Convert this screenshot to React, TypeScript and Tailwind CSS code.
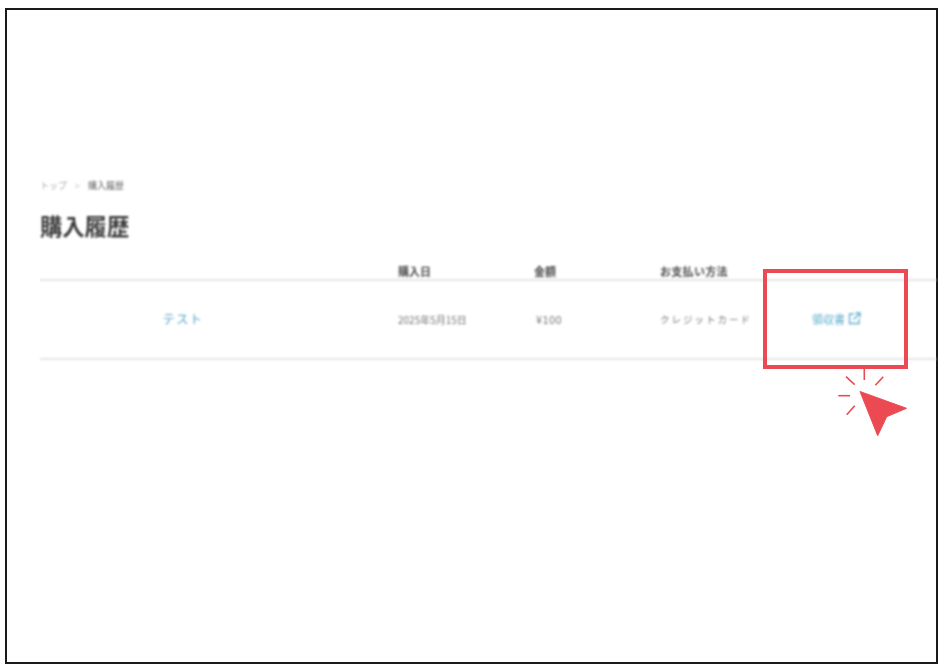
import React from 'react';

const jp = "font-['Noto_Sans_CJK_JP','Noto_Sans',sans-serif]";

function ExternalIcon() {
    return (
        <svg width="13" height="13" viewBox="0 0 13 13" fill="none" stroke="#5fb0cf" strokeWidth="1.4" className="shrink-0 -mt-[2px]">
            <path d="M6 2H1.5v9.5H11V7" />
            <path d="M5.5 7.5 11.5 1.5M7.5 1h4.5v4.5" />
        </svg>
    );
}

export default function App() {
    return (
        <div className={`relative w-[944px] h-[668px] bg-white pt-2 pl-[5px] overflow-hidden ${jp}`}>
            {/* Outer frame */}
            <div className="w-[933px] h-[656px] border-2 border-[#1a1a1a] pt-[169px] pl-[33px]">
                <div className="blur-[0.8px]">
                    {/* Breadcrumb */}
                    <div className="flex items-center h-3 text-[9px] leading-none">
                        <span className="text-[#a8a8a8]">トップ</span>
                        <span className="ml-[8px] mr-[8px] text-[#c0c0c0]">&gt;</span>
                        <span className="text-[#5c5c5c]">購入履歴</span>
                    </div>

                    <h1 className="mt-[19px] h-[30px] text-[22.3px] leading-[30px] font-bold text-[#3c3c3c]">購入履歴</h1>

                    {/* Table header */}
                    <div className="mt-[23px] flex h-[18px] items-center border-b-2 border-[#e6e6e6] text-[11px] font-bold text-[#4a4a4a]">
                        <div className="w-[358px]" />
                        <div className="w-[136px]">購入日</div>
                        <div className="w-[126px]">金額</div>
                        <div className="tracking-[0.3px]">お支払い方法</div>
                    </div>

                    {/* Row */}
                    <div className="flex h-[79px] items-center border-b-2 border-[#e6e6e6]">
                        <div className="w-[286px] -mt-[2px] text-center text-[12px] font-medium tracking-[1.5px] text-[#6fb3cf]">テスト</div>
                        <div className="w-[72px]" />
                        <div className="w-[136px] text-[10px] text-[#757575]">2025年5月15日</div>
                        <div className="w-[126px] pl-[2px] text-[11px] tracking-[0.4px] text-[#757575]">¥100</div>
                        <div className="w-[152px] text-[9.5px] tracking-[2px] text-[#757575]">クレジットカード</div>
                        <div className="flex items-center gap-[3px] text-[11px] text-[#5fb0cf]">
                            領収書
                            <ExternalIcon />
                        </div>
                    </div>
                </div>
            </div>

            {/* Callout highlight */}
            <div className="absolute left-[763px] top-[269px] w-[145px] h-[100px] border-4 border-[#ec4a52]" />

            {/* Click cursor */}
            <svg className="absolute left-[830px] top-[365px]" width="85" height="80" viewBox="0 0 85 80" fill="none">
                <g stroke="#ec4a52" strokeWidth="1.6">
                    <path d="M34.3 4V15" />
                    <path d="M16 11.7 24.7 19.7" />
                    <path d="M53.3 11.7 45.3 20.3" />
                    <path d="M8.3 30.7H20" />
                    <path d="M24.7 40.7 16.7 49.7" />
                </g>
                <path d="M30 26.5 76.5 43.3 56.7 51.7 47.7 70.7Z" fill="#ec4a52" stroke="#ec4a52" strokeLinejoin="round" />
            </svg>
        </div>
    );
}
